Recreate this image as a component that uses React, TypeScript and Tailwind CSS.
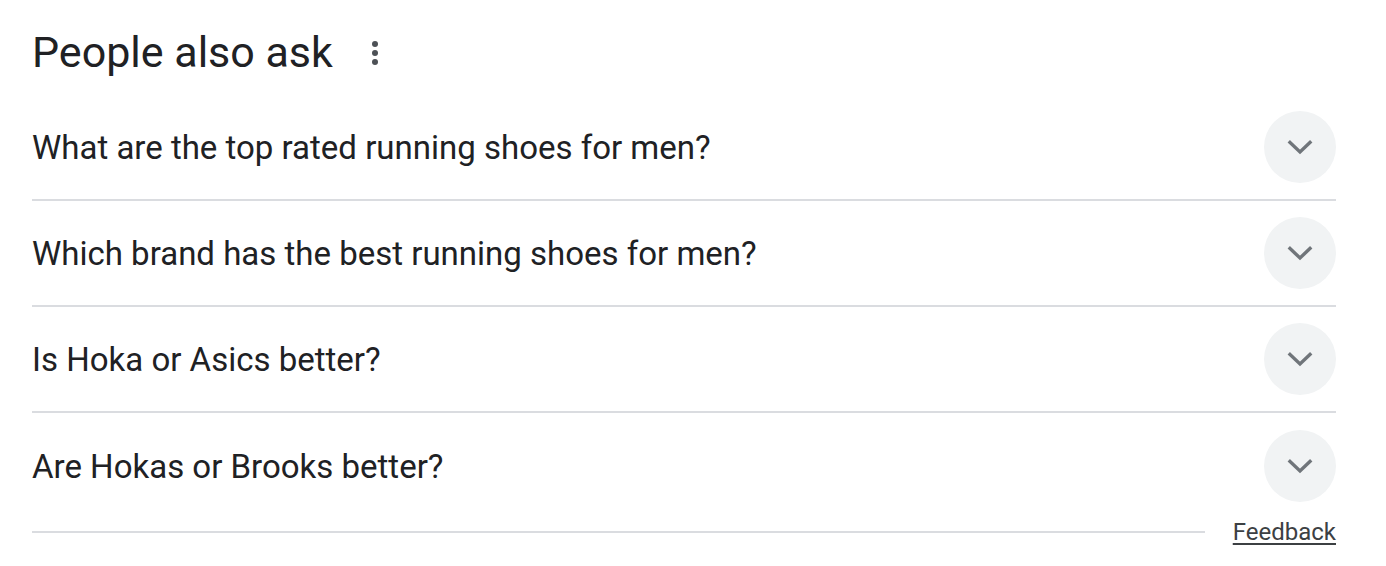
const QUESTIONS = [
  "What are the top rated running shoes for men?",
  "Which brand has the best running shoes for men?",
  "Is Hoka or Asics better?",
  "Are Hokas or Brooks better?",
];

function Chevron() {
  return (
    <svg width="28" height="18" viewBox="0 0 28 18" fill="none">
      <polyline
        points="4,3.5 14,13 24,3.5"
        stroke="#70757a"
        strokeWidth="3.4"
        strokeLinecap="square"
        strokeLinejoin="miter"
      />
    </svg>
  );
}

export default function App() {
  return (
    <div className="w-[1386px] h-[566px] bg-white text-[#202124] font-['Roboto',sans-serif] overflow-hidden">
      <div className="ml-[32px] w-[1304px]">
        {/* header */}
        <div className="flex items-center h-[95px] pt-[10px]">
          <h2 className="text-[43px] leading-none tracking-[0px]">People also ask</h2>
          <div className="ml-[39px] flex flex-col gap-[3px] items-center">
            <span className="w-[6px] h-[6px] rounded-full bg-[#4d5156]" />
            <span className="w-[6px] h-[6px] rounded-full bg-[#4d5156]" />
            <span className="w-[6px] h-[6px] rounded-full bg-[#4d5156]" />
          </div>
        </div>

        {/* questions */}
        {QUESTIONS.map((q, i) => (
          <div
            key={i}
            className={`flex items-center justify-between h-[106px] ${i < QUESTIONS.length - 1 ? "border-b-2 border-[#dadce0]" : ""}`}
          >
            <span className="text-[33px] leading-none">{q}</span>
            <div className="w-[72px] h-[72px] rounded-full bg-[#f1f3f4] flex items-center justify-center pt-[2px]">
              <Chevron />
            </div>
          </div>
        ))}

        {/* footer */}
        <div className="flex items-center gap-[28px] h-[26px]">
          <div className="flex-1 h-[2px] bg-[#dadce0]" />
          <a className="text-[24px] leading-none text-[#3c4043] underline underline-offset-[3px]">Feedback</a>
        </div>
      </div>
    </div>
  );
}
